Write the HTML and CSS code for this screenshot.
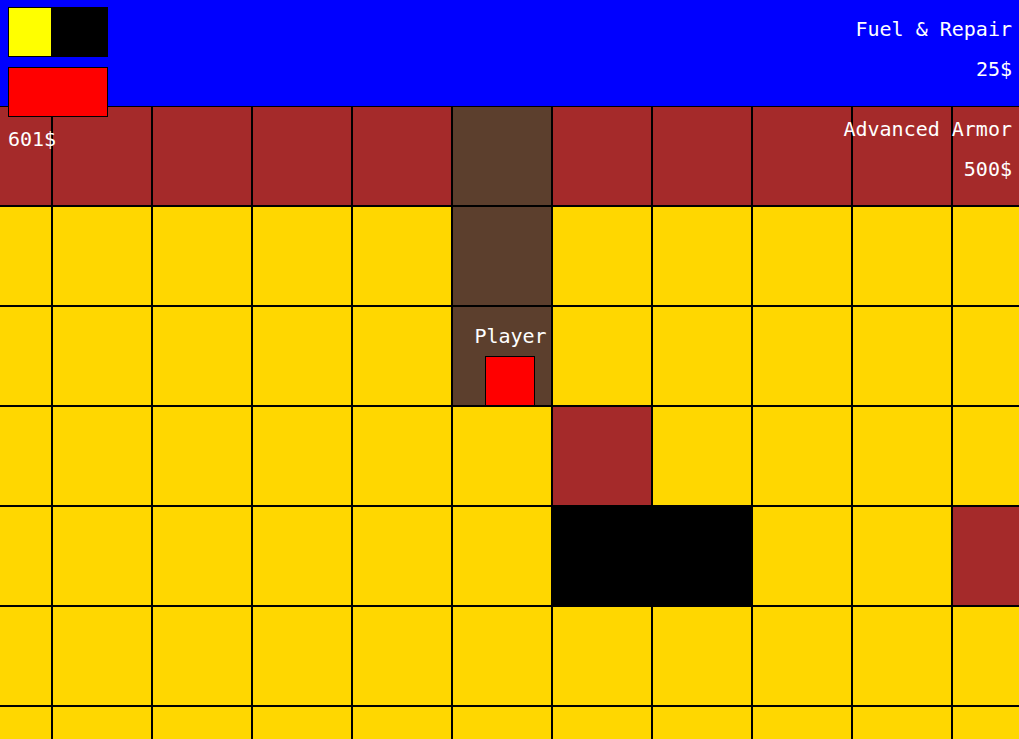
FILE: index.html
```html
<!DOCTYPE html>
<html>
<head>
<meta charset="utf-8">
<link rel="stylesheet" href="styles.css">
</head>
<body>
<div class="screen">
  <div class="topbar"></div>
  <div class="grid">
    <div class="cell dirt"></div><div class="cell dirt"></div><div class="cell dirt"></div><div class="cell dirt"></div><div class="cell dirt"></div><div class="cell tunnel"></div><div class="cell dirt"></div><div class="cell dirt"></div><div class="cell dirt"></div><div class="cell dirt"></div><div class="cell dirt"></div>
    <div class="cell gold"></div><div class="cell gold"></div><div class="cell gold"></div><div class="cell gold"></div><div class="cell gold"></div><div class="cell tunnel"></div><div class="cell gold"></div><div class="cell gold"></div><div class="cell gold"></div><div class="cell gold"></div><div class="cell gold"></div>
    <div class="cell gold"></div><div class="cell gold"></div><div class="cell gold"></div><div class="cell gold"></div><div class="cell gold"></div>
    <div class="cell tunnel">
      <div class="player">
        <span class="player-name">Player</span>
        <div class="player-body"></div>
      </div>
    </div>
    <div class="cell gold"></div><div class="cell gold"></div><div class="cell gold"></div><div class="cell gold"></div><div class="cell gold"></div>
    <div class="cell gold"></div><div class="cell gold"></div><div class="cell gold"></div><div class="cell gold"></div><div class="cell gold"></div><div class="cell gold"></div><div class="cell dirt"></div><div class="cell gold"></div><div class="cell gold"></div><div class="cell gold"></div><div class="cell gold"></div>
    <div class="cell gold"></div><div class="cell gold"></div><div class="cell gold"></div><div class="cell gold"></div><div class="cell gold"></div><div class="cell gold"></div><div class="cell rock"></div><div class="cell rock"></div><div class="cell gold"></div><div class="cell gold"></div><div class="cell dirt"></div>
    <div class="cell gold"></div><div class="cell gold"></div><div class="cell gold"></div><div class="cell gold"></div><div class="cell gold"></div><div class="cell gold"></div><div class="cell gold"></div><div class="cell gold"></div><div class="cell gold"></div><div class="cell gold"></div><div class="cell gold"></div>
    <div class="cell gold"></div><div class="cell gold"></div><div class="cell gold"></div><div class="cell gold"></div><div class="cell gold"></div><div class="cell gold"></div><div class="cell gold"></div><div class="cell gold"></div><div class="cell gold"></div><div class="cell gold"></div><div class="cell gold"></div>
  </div>

  <div class="hud">
    <div class="hud-left">
      <div class="meter fuel"><div class="meter-fill" style="width:42px"></div></div>
      <div class="meter health"></div>
      <div class="money">601$</div>
    </div>
    <div class="hud-right">
      <div class="shop-item">
        <div class="shop-line">Fuel &amp; Repair</div>
        <div class="shop-line">25$</div>
      </div>
      <div class="shop-item">
        <div class="shop-line">Advanced Armor</div>
        <div class="shop-line">500$</div>
      </div>
    </div>
  </div>
</div>
</body>
</html>
```

FILE: styles.css
```css
html, body {
  margin: 0;
  padding: 0;
  background: #000;
  overflow: hidden;
}

.screen {
  position: relative;
  width: 1019px;
  height: 739px;
  overflow: hidden;
  font-family: "DejaVu Sans Mono", "Liberation Mono", monospace;
  font-size: 20px;
  line-height: 20px;
  color: #fff;
}

.topbar {
  height: 106px;
  background: #0000ff;
}

.grid {
  display: grid;
  grid-template-columns: repeat(11, 100px);
  grid-auto-rows: 100px;
  margin-left: -48px;
  width: 1100px;
}

.cell {
  box-sizing: border-box;
  border: 1px solid #000;
  position: relative;
}

.gold { background: #ffd700; }
.dirt { background: #a52a2a; }
.tunnel { background: #5c3f2d; }
.rock { background: #000; }

.player {
  position: absolute;
  left: 32px;
  top: 19px;
  width: 50px;
  display: flex;
  flex-direction: column;
  align-items: center;
}

.player-name {
  white-space: nowrap;
  height: 30px;
  margin-left: 1px;
}

.player-body {
  box-sizing: border-box;
  width: 50px;
  height: 50px;
  background: #ff0000;
  border: 1px solid #000;
}

.hud {
  position: absolute;
  left: 0;
  top: 0;
  right: 0;
  display: flex;
  justify-content: space-between;
}

.hud-left {
  padding: 7px 0 0 8px;
  display: flex;
  flex-direction: column;
  gap: 10px;
}

.meter {
  box-sizing: border-box;
  width: 100px;
  height: 50px;
  border: 1px solid #000;
}

.fuel { background: #000; }
.meter-fill {
  height: 100%;
  background: #ffff00;
}
.health { background: #ff0000; }

.money {
  margin-top: 2px;
}

.hud-right {
  padding: 9px 7px 0 0;
  display: flex;
  flex-direction: column;
  align-items: flex-end;
}

.shop-item {
  height: 100px;
  text-align: right;
}

.shop-line {
  line-height: 40px;
  white-space: nowrap;
}
```
